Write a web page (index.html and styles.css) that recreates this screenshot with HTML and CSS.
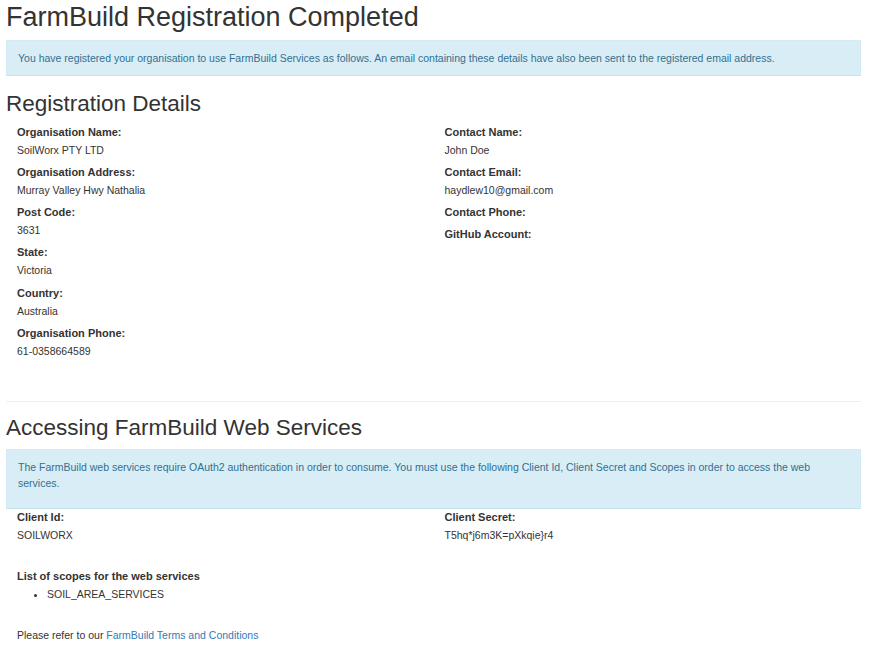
FILE: index.html
```html
<!DOCTYPE html>
<html lang="en">
<head>
<meta charset="utf-8">
<title>FarmBuild Registration Completed</title>
<link rel="stylesheet" href="styles.css">
</head>
<body>
<div class="page">
  <h1 class="title">FarmBuild Registration Completed</h1>
  <div class="alert alert-intro">You have registered your organisation to use FarmBuild Services as follows. An email containing these details have also been sent to the registered email address.</div>

  <h2 class="section-title">Registration Details</h2>
  <div class="row">
    <div class="col">
      <div class="field"><div class="field-label">Organisation Name:</div><div class="field-value">SoilWorx PTY LTD</div></div>
      <div class="field"><div class="field-label">Organisation Address:</div><div class="field-value">Murray Valley Hwy Nathalia</div></div>
      <div class="field"><div class="field-label">Post Code:</div><div class="field-value">3631</div></div>
      <div class="field"><div class="field-label">State:</div><div class="field-value">Victoria</div></div>
      <div class="field"><div class="field-label">Country:</div><div class="field-value">Australia</div></div>
      <div class="field"><div class="field-label">Organisation Phone:</div><div class="field-value">61-0358664589</div></div>
    </div>
    <div class="col">
      <div class="field"><div class="field-label">Contact Name:</div><div class="field-value">John Doe</div></div>
      <div class="field"><div class="field-label">Contact Email:</div><div class="field-value">haydlew10@gmail.com</div></div>
      <div class="field"><div class="field-label">Contact Phone:</div><div class="field-value"></div></div>
      <div class="field"><div class="field-label">GitHub Account:</div><div class="field-value"></div></div>
    </div>
  </div>

  <hr class="divider">

  <h2 class="section-title">Accessing FarmBuild Web Services</h2>
  <div class="alert alert-oauth">The FarmBuild web services require OAuth2 authentication in order to consume. You must use the following Client Id, Client Secret and Scopes in order to access the web services.</div>

  <div class="row">
    <div class="col">
      <div class="field"><div class="field-label">Client Id:</div><div class="field-value">SOILWORX</div></div>
    </div>
    <div class="col">
      <div class="field"><div class="field-label">Client Secret:</div><div class="field-value">T5hq*j6m3K=pXkqie}r4</div></div>
    </div>
  </div>

  <div class="scopes">
    <div class="field-label">List of scopes for the web services</div>
    <ul class="scope-list">
      <li>SOIL_AREA_SERVICES</li>
    </ul>
    <p class="note">Please refer to our <a class="link" href="#">FarmBuild Terms and Conditions</a></p>
  </div>
</div>
</body>
</html>
```

FILE: styles.css
```css
html, body {
  margin: 0;
  padding: 0;
  background: #ffffff;
}

body {
  font-family: "Liberation Sans", Arial, sans-serif;
  font-size: 10.5px;
  line-height: 15px;
  color: #333333;
}

.page {
  width: 855px;
  margin-left: 6px;
  padding-top: 3px;
}

.title {
  font-size: 27px;
  font-weight: normal;
  line-height: 1.1;
  margin: 0 0 7.3px;
  color: #333333;
}

.section-title {
  font-size: 22.5px;
  font-weight: normal;
  line-height: 1.1;
  margin: 0 0 8px;
  color: #333333;
}

.alert {
  background: #d9edf7;
  border: 1px solid #d3eaf5;
  border-bottom-color: #c8e3f0;
  color: #31708f;
}

.alert-intro {
  padding: 10px 11px;
  line-height: 14px;
  margin-bottom: 15.8px;
}

.alert-oauth {
  padding: 9px 11px 17px;
  line-height: 16px;
  margin-top: 1px;
  margin-bottom: 1px;
}

.row {
  display: grid;
  grid-template-columns: 1fr 1fr;
}

.col {
  padding: 0 11px;
}

.field {
  margin-bottom: 7.3px;
}

.field-label {
  font-weight: bold;
  font-size: 11px;
  line-height: 15px;
  margin-bottom: 3px;
}

.field-value {
  line-height: 15px;
}

.divider {
  border: 0;
  border-top: 1px solid #eeeeee;
  margin: 34.7px 0 14px;
  height: 0;
}

.scopes {
  padding: 0 11px;
  margin-top: 18.7px;
}

.scope-list {
  margin: 0;
  padding-left: 30px;
}

.note {
  margin: 26.6px 0 0;
}

.link {
  color: #337ab7;
  text-decoration: none;
}
```
